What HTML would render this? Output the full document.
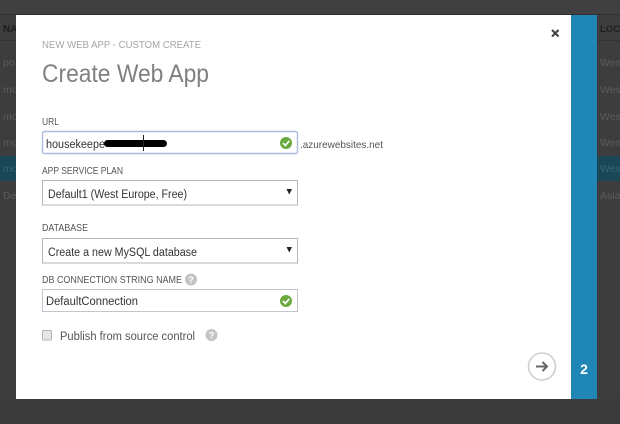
<!DOCTYPE html>
<html>
<head>
<meta charset="utf-8">
<style>
html,body{margin:0;padding:0;background:#3c3c3c;width:620px;height:424px;overflow:hidden}
svg{display:block;position:absolute;left:0;top:0;filter:blur(0.3px)}
text{font-family:"Liberation Sans",sans-serif}
</style>
</head>
<body>
<svg width="620" height="424" viewBox="0 0 620 424" xmlns="http://www.w3.org/2000/svg">
  <rect width="620" height="424" fill="#3b3b3b"/>
  <rect x="0" y="0" width="620" height="14" fill="#404040"/>
  <rect x="0" y="14" width="620" height="1.500" fill="#2f2f2f"/>
  <!-- dim table left -->
  <rect x="0" y="15" width="16" height="384" fill="#3d3d3d"/>
  <rect x="0" y="40" width="16" height="1" fill="#333"/>
  <rect x="0" y="156" width="16" height="25" fill="#1a4656"/>
  <text x="3" y="32" font-size="10" font-weight="bold" fill="#1e1e1e">NA</text>
  <g font-size="10.500" fill="#5c5c5c">
    <text x="3" y="66">po</text>
    <text x="3" y="93">mo</text>
    <text x="3" y="120">mo</text>
    <text x="3" y="146">mo</text>
    <text x="3" y="172" fill="#336878">mo</text>
    <text x="3" y="199">De</text>
  </g>
  <!-- dim table right -->
  <rect x="597" y="15" width="23" height="384" fill="#3d3d3d"/>
  <rect x="597" y="40" width="23" height="1" fill="#333"/>
  <rect x="597" y="156" width="23" height="25" fill="#1a4656"/>
  <text x="600" y="32" font-size="9.500" fill="#1e1e1e" font-weight="bold">LOCA</text>
  <g font-size="10.500" fill="#5c5c5c">
    <text x="600" y="66">West</text>
    <text x="600" y="93">West</text>
    <text x="600" y="120">West</text>
    <text x="600" y="146">West</text>
    <text x="600" y="172" fill="#336878">West</text>
    <text x="600" y="199">Asia</text>
  </g>
  <!-- modal -->
  <rect x="16" y="15" width="555" height="384" fill="#ffffff"/>
  <rect x="571" y="15" width="26" height="384" fill="#1f86b6"/>
  <text x="584" y="374" font-size="14" font-weight="bold" fill="#ffffff" text-anchor="middle">2</text>
  <!-- close -->
  <path d="M552 30 L558.500 36.500 M558.500 30 L552 36.500" stroke="#404040" stroke-width="2" fill="none"/>
  <!-- headings -->
  <text x="42" y="48" font-size="10" fill="#a6a6a6" textLength="159" lengthAdjust="spacingAndGlyphs">NEW WEB APP - CUSTOM CREATE</text>
  <text x="42" y="82" font-size="25" fill="#808080" textLength="167" lengthAdjust="spacingAndGlyphs">Create Web App</text>
  <!-- URL -->
  <text x="42" y="125" font-size="10" fill="#555" textLength="17" lengthAdjust="spacingAndGlyphs">URL</text>
  <rect x="42.500" y="131.500" width="255" height="22" rx="2" fill="#fff" stroke="#a9bbdc" stroke-width="1.400"/>
  <text x="46" y="148" font-size="11.500" fill="#333" textLength="59" lengthAdjust="spacingAndGlyphs">housekeepe</text>
  <rect x="104" y="140" width="63" height="7" rx="3.500" fill="#000"/>
  <rect x="143" y="135" width="1" height="16" fill="#222"/>
  <circle cx="286" cy="143" r="6" fill="#69a93c"/>
  <path d="M283 143 L285.300 145.500 L289.300 140.800" stroke="#fff" stroke-width="1.700" fill="none"/>
  <text x="300" y="148" font-size="10.500" fill="#555" textLength="83" lengthAdjust="spacingAndGlyphs">.azurewebsites.net</text>
  <!-- App service plan -->
  <text x="42" y="174" font-size="10" fill="#555" textLength="81" lengthAdjust="spacingAndGlyphs">APP SERVICE PLAN</text>
  <rect x="42.500" y="180.500" width="255" height="24.500" fill="#fff" stroke="#b5b5b5"/>
  <text x="48" y="198" font-size="11.500" fill="#333" textLength="139" lengthAdjust="spacingAndGlyphs">Default1 (West Europe, Free)</text>
  <path d="M286.500 189 L292 189 L289.250 194.500 Z" fill="#222"/>
  <!-- Database -->
  <text x="42" y="231" font-size="10" fill="#555" textLength="46" lengthAdjust="spacingAndGlyphs">DATABASE</text>
  <rect x="42.500" y="238.500" width="255" height="24.500" fill="#fff" stroke="#b5b5b5"/>
  <text x="48" y="256" font-size="11.500" fill="#333" textLength="149" lengthAdjust="spacingAndGlyphs">Create a new MySQL database</text>
  <path d="M286.500 247 L292 247 L289.250 252.500 Z" fill="#222"/>
  <!-- DB connection -->
  <text x="42" y="283" font-size="10" fill="#555" textLength="140" lengthAdjust="spacingAndGlyphs">DB CONNECTION STRING NAME</text>
  <circle cx="191" cy="279.500" r="6" fill="#c4c4c4"/>
  <text x="191" y="283" font-size="9" font-weight="bold" fill="#fff" text-anchor="middle">?</text>
  <rect x="42.500" y="289.500" width="255" height="22" fill="#fff" stroke="#c0c5ce"/>
  <text x="46" y="305" font-size="11.500" fill="#333" textLength="92" lengthAdjust="spacingAndGlyphs">DefaultConnection</text>
  <circle cx="286" cy="301" r="6" fill="#69a93c"/>
  <path d="M283 301 L285.300 303.500 L289.300 298.800" stroke="#fff" stroke-width="1.700" fill="none"/>
  <!-- Checkbox -->
  <rect x="42.500" y="330.500" width="9" height="9.500" rx="1" fill="#e6e6e6" stroke="#b5b5b5"/>
  <text x="60" y="340" font-size="11.500" fill="#555" textLength="135" lengthAdjust="spacingAndGlyphs">Publish from source control</text>
  <circle cx="211.500" cy="335" r="6" fill="#c4c4c4"/>
  <text x="211.500" y="338.500" font-size="9" font-weight="bold" fill="#fff" text-anchor="middle">?</text>
  <!-- Next -->
  <circle cx="542" cy="366.500" r="13.500" fill="#fff" stroke="#cfcfcf" stroke-width="1.600"/>
  <path d="M536 366.500 L547 366.500 M542.500 362 L547 366.500 L542.500 371" stroke="#666" stroke-width="2" fill="none"/>
</svg>
</body>
</html>
